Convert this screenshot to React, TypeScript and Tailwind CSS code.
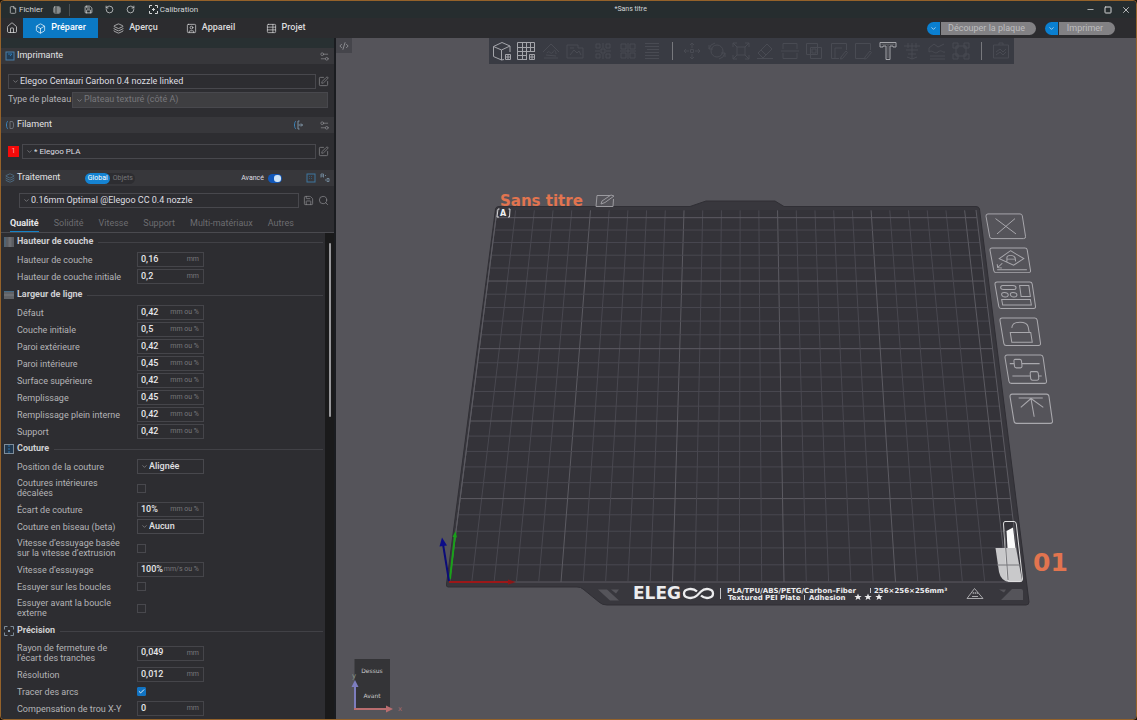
import { useState } from 'react';
import type { ReactNode } from 'react';
import clsx from 'clsx';
import {
  Box,
  Check,
  ChevronDown,
  CodeXml,
  File,
  House,
  Layers,
  Minus,
  RotateCcw,
  RotateCw,
  Save,
  Search,
  Settings2,
  Square,
  SquarePen,
  SquareUser,
  TableProperties,
  X,
} from 'lucide-react';

type Field =
  | { kind: 'text'; id: string; label: string; value: string; unit: string }
  | { kind: 'select'; id: string; label: string; options: string[] }
  | { kind: 'check'; id: string; label: string; checked?: boolean };

type Group = { title: string; icon: ReactNode; fields: Field[] };

const GROUPS: Group[] = [
  {
    title: 'Hauteur de couche',
    icon: (
      <svg viewBox="0 0 10 10" className="size-[10px]">
        <rect width="10" height="10" fill="#5b5d62" />
        <path d="M1 0v10" stroke="#456a86" strokeWidth="1" />
        <path d="M6 0v10" stroke="#6c6e73" strokeWidth="3" />
      </svg>
    ),
    fields: [
      { kind: 'text', id: 'layer', label: 'Hauteur de couche', value: '0,16', unit: 'mm' },
      { kind: 'text', id: 'first-layer', label: 'Hauteur de couche initiale', value: '0,2', unit: 'mm' },
    ],
  },
  {
    title: 'Largeur de ligne',
    icon: (
      <svg viewBox="0 0 10 10" className="size-[10px]">
        <rect y="1" width="10" height="8" fill="#606267" />
        <path d="M0 1.500h10" stroke="#456a86" strokeWidth="1" />
        <path d="M0 5h10" stroke="#6c6e73" strokeWidth="2" />
      </svg>
    ),
    fields: [
      { kind: 'text', id: 'w-default', label: 'Défaut', value: '0,42', unit: 'mm ou %' },
      { kind: 'text', id: 'w-first', label: 'Couche initiale', value: '0,5', unit: 'mm ou %' },
      { kind: 'text', id: 'w-outer', label: 'Paroi extérieure', value: '0,42', unit: 'mm ou %' },
      { kind: 'text', id: 'w-inner', label: 'Paroi intérieure', value: '0,45', unit: 'mm ou %' },
      { kind: 'text', id: 'w-top', label: 'Surface supérieure', value: '0,42', unit: 'mm ou %' },
      { kind: 'text', id: 'w-infill', label: 'Remplissage', value: '0,45', unit: 'mm ou %' },
      { kind: 'text', id: 'w-solid', label: 'Remplissage plein interne', value: '0,42', unit: 'mm ou %' },
      { kind: 'text', id: 'w-support', label: 'Support', value: '0,42', unit: 'mm ou %' },
    ],
  },
  {
    title: 'Couture',
    icon: (
      <svg viewBox="0 0 10 10" className="size-[10px]" fill="none">
        <rect x=".5" y=".5" width="9" height="9" fill="#22384e" stroke="#7d8c99" />
        <path d="M5 1v8" stroke="#2f76ad" strokeDasharray="2 1" />
      </svg>
    ),
    fields: [
      { kind: 'select', id: 'seam-pos', label: 'Position de la couture', options: ['Alignée', 'Arrière', 'Aléatoire'] },
      { kind: 'check', id: 'seam-stagger', label: 'Coutures intérieures décalées' },
      { kind: 'text', id: 'seam-gap', label: 'Écart de couture', value: '10%', unit: 'mm ou %' },
      { kind: 'select', id: 'scarf', label: 'Couture en biseau (beta)', options: ['Aucun', 'Contour', 'Tout'] },
      { kind: 'check', id: 'wipe-base', label: 'Vitesse d’essuyage basée sur la vitesse d’extrusion' },
      { kind: 'text', id: 'wipe-speed', label: 'Vitesse d’essuyage', value: '100%', unit: 'mm/s ou %' },
      { kind: 'check', id: 'wipe-loops', label: 'Essuyer sur les boucles' },
      { kind: 'check', id: 'wipe-before', label: 'Essuyer avant la boucle externe' },
    ],
  },
  {
    title: 'Précision',
    icon: (
      <svg viewBox="0 0 10 10" className="size-[10px]" fill="none">
        <path d="M.5 3.500v-3h3M6.500.5h3v3M9.500 6.500v3h-3M3.500 9.500h-3v-3" stroke="#7d8c99" />
        <rect x="4" y="4" width="2" height="2" fill="#8aa3b8" />
      </svg>
    ),
    fields: [
      { kind: 'text', id: 'gap-radius', label: 'Rayon de fermeture de l’écart des tranches', value: '0,049', unit: 'mm' },
      { kind: 'text', id: 'resolution', label: 'Résolution', value: '0,012', unit: 'mm' },
      { kind: 'check', id: 'arcs', label: 'Tracer des arcs', checked: true },
      { kind: 'text', id: 'hole-xy', label: 'Compensation de trou X-Y', value: '0', unit: 'mm' },
    ],
  },
];

const MAIN_TABS = [
  { name: 'Préparer', Icon: Box },
  { name: 'Aperçu', Icon: Layers },
  { name: 'Appareil', Icon: SquareUser },
  { name: 'Projet', Icon: TableProperties },
];

const PROCESS_TABS = ['Qualité', 'Solidité', 'Vitesse', 'Support', 'Multi-matériaux', 'Autres'];

function TitleBar() {
  return (
    <header className="flex h-[17px] shrink-0 items-center bg-[#262d2f] text-[#d4d6d7]">
      <button className="ml-2 flex items-center gap-[2px] text-[8px]">
        <File size={8} />
        Fichier
      </button>
      <button aria-label="Menu" className="ml-[10px]">
        <TableProperties size={8} />
      </button>
      <span className="ml-2 h-3 w-px bg-[#4a5052]" />
      <button aria-label="Enregistrer" className="ml-[14px]">
        <Save size={9} />
      </button>
      <button aria-label="Annuler" className="ml-3">
        <RotateCcw size={9} />
      </button>
      <button aria-label="Rétablir" className="ml-3">
        <RotateCw size={9} />
      </button>
      <button className="ml-[14px] flex items-center gap-[2px] text-[8px]">
        <svg viewBox="0 0 9 9" className="size-[9px]" fill="none" stroke="currentColor">
          <path d="M.5 3V.5H3M6 .5h2.500V3M8.500 6v2.500H6M3 8.500H.5V6M4.500 3v3M3 4.500h3" />
        </svg>
        Calibration
      </button>
      <h1 className="flex-1 text-center text-[7px]">*Sans titre</h1>
      <div className="flex items-center pl-[18px]">
        <button aria-label="Réduire" className="flex w-[18px] justify-center">
          <Minus size={9} />
        </button>
        <button aria-label="Agrandir" className="flex w-[18px] justify-center">
          <Square size={8} strokeWidth={3} />
        </button>
        <button aria-label="Fermer" className="mr-px flex w-[18px] justify-center">
          <X size={10} />
        </button>
      </div>
    </header>
  );
}

function SplitButton({ text, wide }: { text: string; wide?: boolean }) {
  return (
    <div className="flex h-[13px] gap-px">
      <button aria-label={`Options : ${text}`} className="flex w-[13px] items-center justify-center rounded-l-full bg-[#0a7fd0] text-white">
        <ChevronDown size={7} />
      </button>
      <button
        className={clsx('rounded-r-full bg-[#828184] pr-1 text-[9px] leading-[13px] text-[#bdbdbf]', wide ? 'w-[95px]' : 'w-[56px]')}
      >
        {text}
      </button>
    </div>
  );
}

function NavBar() {
  return (
    <nav className="flex h-5 shrink-0 items-center bg-[#2c2c2f] text-[#dcdcde]">
      <button aria-label="Accueil" className="flex w-[22px] justify-center">
        <House size={12} strokeWidth={1.5} />
      </button>
      {MAIN_TABS.map(({ name, Icon }, i) => (
        <button
          key={name}
          className={clsx(
            'flex h-5 w-[75px] items-center justify-center gap-[5px] text-[9px] font-medium',
            i === 0 && 'bg-[#0b79c4] text-white',
          )}
        >
          <Icon size={11} strokeWidth={1.5} />
          {name}
        </button>
      ))}
      <div className="ml-auto mr-[21px] flex gap-[9px]">
        <SplitButton text="Découper la plaque" wide />
        <SplitButton text="Imprimer" />
      </div>
    </nav>
  );
}

function Picker({ id, label, options, className }: { id: string; label: string; options: string[]; className?: string }) {
  return (
    <div className={clsx('relative flex items-center border border-[#48484d]', className)}>
      <ChevronDown size={7} className="pointer-events-none absolute left-[3px] text-[#a0a0a4]" />
      <select id={id} aria-label={label} className="h-full w-full appearance-none bg-transparent pl-[11px] text-inherit outline-none">
        {options.map((o) => (
          <option key={o}>{o}</option>
        ))}
      </select>
    </div>
  );
}

function PanelHeader({ icon, title, children }: { icon: ReactNode; title: string; children?: ReactNode }) {
  return (
    <div className="flex h-4 items-center bg-[#37373b] pl-1 pr-1">
      {icon}
      <h2 className="ml-[2px] text-[9px] text-[#e4e4e6]">{title}</h2>
      {children}
    </div>
  );
}

function FieldRow({ field }: { field: Field }) {
  const twoLines = field.label.length > 26;
  return (
    <div className={clsx('flex items-center pl-4', twoLines ? 'h-[26px]' : 'h-[17px]')}>
      <label htmlFor={field.id} className="mr-3 w-[108px] text-[9px] leading-[10px] text-[#b4b4b7]">
        {field.label}
      </label>
      {field.kind === 'text' && (
        <div className="flex h-[15px] w-[67px] items-center border border-[#45454a] pl-[3px] pr-1">
          <input
            id={field.id}
            defaultValue={field.value}
            className="w-0 min-w-0 flex-1 bg-transparent text-[9px] font-medium text-[#e6e6e8] outline-none"
          />
          <span className="text-[7px] leading-[15px] text-[#77777b]">{field.unit}</span>
        </div>
      )}
      {field.kind === 'select' && (
        <Picker
          id={field.id}
          label={field.label}
          options={field.options}
          className="h-[15px] w-[67px] text-[9px] font-medium text-[#e0e0e2]"
        />
      )}
      {field.kind === 'check' && (
        <span className="relative flex size-[9px]">
          <input
            id={field.id}
            type="checkbox"
            defaultChecked={field.checked}
            className="peer size-[9px] appearance-none border border-[#48484d] checked:rounded-[1px] checked:border-[#1173c2] checked:bg-[#1173c2]"
          />
          <Check size={7} strokeWidth={3} className="pointer-events-none absolute left-px top-px hidden text-white peer-checked:block" />
        </span>
      )}
    </div>
  );
}

function Sidebar() {
  const [tab, setTab] = useState(0);

  return (
    <aside className="flex w-[335px] shrink-0 flex-col border-r-2 border-[#1a1c20] bg-[#2d2d31]">
      <div className="h-[10px] shrink-0 bg-[#283032]" />
      <PanelHeader
        title="Imprimante"
        icon={
          <svg viewBox="0 0 10 10" className="size-[10px]" fill="none">
            <rect x="1" y="1" width="8" height="8" fill="#223b53" stroke="#4a7ea8" />
            <path d="M3 3h4M5 5l2-2" stroke="#2f76ad" />
          </svg>
        }
      >
        <button aria-label="Réglages imprimante" className="ml-auto text-[#8f8f93]">
          <Settings2 size={11} strokeWidth={1.5} />
        </button>
      </PanelHeader>
      <div className="flex items-center gap-[2px] pl-[7px] pr-[5px] pt-[10px]">
        <Picker
          id="printer"
          label="Imprimante"
          options={['Elegoo Centauri Carbon 0.4 nozzle linked']}
          className="h-[15px] flex-1 text-[9px] text-[#dfdfe1]"
        />
        <button aria-label="Modifier l’imprimante" className="text-[#8f8f93]">
          <SquarePen size={11} strokeWidth={1.5} />
        </button>
      </div>
      <div className="flex items-center pb-[9px] pl-[7px] pr-[6px] pt-[3px] text-[9px]">
        <label htmlFor="plate-type" className="w-16 whitespace-nowrap text-[#b4b4b7]">
          Type de plateau
        </label>
        <Picker
          id="plate-type"
          label="Type de plateau"
          options={['Plateau texturé (côté A)']}
          className="h-4 flex-1 bg-[#3e3e41] text-[#77777b]"
        />
      </div>

      <PanelHeader
        title="Filament"
        icon={
          <svg viewBox="0 0 10 10" className="size-[10px]" fill="none">
            <path d="M3 1C1 2 1 8 3 9" stroke="#3c84ba" />
            <path d="M5 1.500v7H7.500C9 7 9 3 7.500 1.500z" stroke="#6a7076" />
          </svg>
        }
      >
        <button aria-label="Synchroniser" className="ml-auto mr-4 text-[#7f93a4]">
          <svg viewBox="0 0 10 10" className="size-[10px]" fill="none" stroke="currentColor">
            <path d="M3 1C1 2 1 8 3 9" stroke="#3c84ba" />
            <path d="M6.500 1H5v8h1.500M5.500 5H9.500M8 3.500 9.500 5 8 6.500" />
          </svg>
        </button>
        <button aria-label="Réglages filament" className="text-[#8f8f93]">
          <Settings2 size={11} strokeWidth={1.5} />
        </button>
      </PanelHeader>
      <div className="flex items-center pb-[11px] pl-[7px] pr-[5px] pt-[11px]">
        <button className="size-[11px] bg-[#f50a0a] text-[7px] leading-[11px] text-[#ffb0a8]">1</button>
        <Picker id="filament" label="Filament" options={['* Elegoo PLA']} className="ml-[3px] h-[15px] flex-1 text-[8px] text-[#dfdfe1]" />
        <button aria-label="Modifier le filament" className="ml-[2px] text-[#8f8f93]">
          <SquarePen size={11} strokeWidth={1.5} />
        </button>
      </div>

      <PanelHeader title="Traitement" icon={<Layers size={10} strokeWidth={1.5} className="text-[#5a87a6]" />}>
        <div className="ml-[25px] flex h-[11px] rounded-full bg-[#2d2d31] text-[7px] leading-[11px]">
          <button className="w-[25px] rounded-full bg-[#1583d2] text-white">Global</button>
          <button className="w-[25px] text-[#77777b]">Objets</button>
        </div>
        <label htmlFor="advanced" className="ml-auto text-[7px] text-[#dfdfe1]">
          Avancé
        </label>
        <span className="relative ml-1 mr-[24px] flex">
          <input
            id="advanced"
            type="checkbox"
            role="switch"
            defaultChecked
            className="peer h-[9px] w-[14px] appearance-none rounded-full bg-[#55555a] checked:bg-[#1257b8]"
          />
          <span className="pointer-events-none absolute left-px top-px size-[7px] rounded-[3px] bg-[#cfe4f7] peer-checked:left-[6px]" />
        </span>
        <button aria-label="Comparer">
          <svg viewBox="0 0 10 10" className="size-[10px]" fill="none" stroke="#3f779f">
            <rect x="1" y="1" width="8" height="8" />
            <path d="M3 3.500h4M3 5.500h4" stroke="#2f5878" strokeDasharray="1 1" />
          </svg>
        </button>
        <button aria-label="Réglages par objet" className="ml-1">
          <svg viewBox="0 0 10 10" className="size-[10px]" fill="none" stroke="#6f8496">
            <path d="M1 4.500V1h2.500v3.500M1 3h2.500M7 5.500h2v3H7zM5 2.500h1M5 7h1" />
          </svg>
        </button>
      </PanelHeader>
      <div className="flex items-center pl-[18px] pr-[5px] pt-[7px]">
        <Picker
          id="process"
          label="Traitement"
          options={['0.16mm Optimal @Elegoo CC 0.4 nozzle']}
          className="h-[15px] flex-1 text-[9px] text-[#dfdfe1]"
        />
        <button aria-label="Enregistrer le profil" className="ml-1 text-[#8f8f93]">
          <Save size={11} strokeWidth={1.5} />
        </button>
        <button aria-label="Rechercher" className="ml-1 text-[#8f8f93]">
          <Search size={11} strokeWidth={1.5} />
        </button>
      </div>

      <div role="tablist" className="mt-2 flex h-[17px] shrink-0 gap-[15px] border-b border-[#4a4a4f] pl-[9px]">
        {PROCESS_TABS.map((name, i) => (
          <button
            key={name}
            role="tab"
            aria-selected={i === tab}
            onClick={() => setTab(i)}
            className={clsx(
              'h-4 border-b text-[9px]',
              i === tab ? 'border-[#1583c8] font-bold text-[#e6e6e8]' : 'border-transparent text-[#6c6c70]',
            )}
          >
            {name}
          </button>
        ))}
      </div>

      <div className="flex min-h-0 flex-1">
        <div className="flex-1 overflow-hidden">
          {GROUPS.map((group, i) => (
            <section key={group.title} className={clsx(i % 2 === 1 && 'mt-px')}>
              <div className="flex h-[18px] items-center gap-[3px] pl-[3px] pr-[2px]">
                {group.icon}
                <h3 className="text-[9px] font-bold text-[#cfcfd2]">{group.title}</h3>
                <span className="ml-[2px] h-px flex-1 bg-[#414146]" />
              </div>
              {group.fields.map((field) => (
                <FieldRow key={field.id} field={field} />
              ))}
            </section>
          ))}
        </div>
        <div className="w-[9px] bg-[#1a1a1b] pl-1 pt-[10px]">
          <div className="h-[174px] w-[2px] rounded-full bg-[#98989b]" />
        </div>
      </div>
    </aside>
  );
}

const TOOLS = {
  orient: { name: 'Orienter', d: 'M2 11 10 3l8 8M3 17h14M6 12c2-4 4 3 6-1s3 0 3 2M5 14l10 1' },
  arrange: { name: 'Disposer', d: 'M2 4h11v3h5v10H2zM5 14l4-5 3 3 2-2 2 4M5 7h4' },
  objects: { name: 'Séparer en objets', d: 'M3 3h4v4H3zM8 8h4v4H8zM13 3h4v4h-4zM3 13h4v4H3zM13 13h4v4h-4zM10 2v5M10 13v5M2 10h5M13 10h5' },
  parts: { name: 'Séparer en pièces', d: 'M3 3h5v5H3zM12 3h5v5h-5zM3 12h5v5H3zM12 12h5v5h-5zM10 2v16M2 10h16' },
  layers: { name: 'Couches variables', d: 'M3 2.500h14M3 5.500h14M5 8.500h12M3 11.500h14M3 14.500h14M3 17.500h14' },
  move: { name: 'Déplacer', d: 'M10 2v5M10 13v5M2 10h5M13 10h5M8 4l2-2 2 2M8 16l2 2 2-2M4 8l-2 2 2 2M16 8l2 2-2 2M8.500 8.500h3v3h-3z' },
  rotate: { name: 'Pivoter', d: 'M10 4a6 6 0 1 0 0 12 6 6 0 0 0 0-12M2 8a8 8 0 0 1 6-6M18 12a8 8 0 0 1-6 6M2 4v4h4M18 16v-4h-4' },
  scale: { name: 'Échelle', d: 'M2 6V2h4M14 2h4v4M18 14v4h-4M6 18H2v-4M6 6h8v8H6zM2 2l4 4M18 2l-4 4M18 18l-4-4M2 18l4-4' },
  flat: { name: 'Poser à plat', d: 'M3 12 12 3l5 5-9 9zM2 17.500h16M6 9l5 5' },
  cut: { name: 'Couper', d: 'M3 8V2.500h14V8M1 10h18M3 12v5.500h14V12' },
  boolean: { name: 'Opération booléenne', d: 'M2.500 2.500h11v11h-11zM6.500 6.500h11v11h-11zM8 8h4v4H8z' },
  support: { name: 'Peindre les supports', d: 'M10 17.500H2.500v-15h15V9M6 17V7h7M12 16l5-6 1.500 1.500-5 6-2 .5z' },
  seam: { name: 'Peindre la couture', d: 'M11 17.500H2.500v-15h15V9M12 16l5-6 1.500 1.500-5 6-2 .5z' },
  height: { name: 'Mesurer', d: 'M2 5h16M4 9h12M6 13h8M10 2v16M6 2v5M14 2v5M5 16l5 2 5-2' },
  fuzzy: { name: 'Surface irrégulière', d: 'M2 7l5-4 4 3 6-3M2 11c4-3 5 3 9 0s4 1 7 0M3 15h15M3 18h15M2 7v4' },
  assemble: { name: 'Assembler', d: 'M5 5h10v10H5zM2 2h5v5H2zM13 2h5v5h-5zM2 13h5v5H2zM13 13h5v5h-5z' },
  assembleView: { name: 'Vue d’assemblage', d: 'M2.500 4h15v13h-15zM5 11l4-3 3 3 3-3M5 14l4-3 3 3 3-3M8 4V2h4v2' },
};

function Tool({ id }: { id: keyof typeof TOOLS }) {
  const { name, d } = TOOLS[id];
  return (
    <button aria-label={name} disabled className="flex w-6 justify-center text-[#494b53]">
      <svg viewBox="0 0 20 20" className="size-5" fill="none" stroke="currentColor">
        <path d={d} />
      </svg>
    </button>
  );
}

function Toolbar() {
  return (
    <div role="toolbar" className="absolute left-[153px] top-0 flex h-[26px] w-[525px] items-center justify-between bg-[#393b43] px-px text-[#a4a5aa]">
      <button aria-label="Ajouter un objet" className="flex w-6 justify-center">
        <svg viewBox="0 0 20 20" className="size-5" fill="none" stroke="currentColor">
          <path d="M12 18.500 9.500 19 1.500 15.500V5.500L10 1.500l8 3.500v6M1.500 5.500 9.500 9l8.500-4M9.500 9v10" />
          <path d="M13.500 13.500h5V18.500h-5zM16 13.500v5M13.500 16h5" />
        </svg>
      </button>
      <button aria-label="Ajouter une plaque" className="flex w-6 justify-center">
        <svg viewBox="0 0 20 20" className="size-5" fill="none" stroke="currentColor">
          <path d="M11 18.500H1.500v-17h17V11M6.500 1.500v17M10.500 1.500v17M14.500 1.500V11M1.500 6.500h17M1.500 10.500h17M1.500 14.500H11" />
          <path d="M13.500 13.500h5v5h-5zM16 13.500v5M13.500 16h5" />
        </svg>
      </button>
      <Tool id="orient" />
      <Tool id="arrange" />
      <span className="w-[3px]" />
      <Tool id="objects" />
      <Tool id="parts" />
      <Tool id="layers" />
      <span className="mx-[7px] h-[18px] w-px bg-[#77787d]" />
      <Tool id="move" />
      <Tool id="rotate" />
      <Tool id="scale" />
      <Tool id="flat" />
      <Tool id="cut" />
      <Tool id="boolean" />
      <Tool id="support" />
      <Tool id="seam" />
      <button aria-label="Texte" className="flex w-6 justify-center">
        <svg viewBox="0 0 20 20" className="size-5" fill="none" stroke="currentColor">
          <path d="M2 1.500h16V6h-3V5h-3v13.500H8V5H5v1H2z" />
          <path d="M3.500 3.200h13M10 4v13" stroke="#66676c" />
        </svg>
      </button>
      <Tool id="height" />
      <Tool id="fuzzy" />
      <Tool id="assemble" />
      <span className="mx-[7px] h-[18px] w-px bg-[#77787d]" />
      <Tool id="assembleView" />
    </div>
  );
}

// bed millimetres / 10 -> canvas point
function project(u: number, v: number) {
  const w = 1 + 0.0075 * v;
  return [(449.5 + 22.3 * u + 5.58 * v) / w, (582 - 12.94 * v) / w];
}

const BED = 25.6;

function GridLines() {
  const lines = [];
  for (let i = 0; i <= 25; i++) {
    const color = i % 5 === 0 ? '#5c5b62' : '#494850';
    const [ax, ay] = project(i, 0);
    const [bx, by] = project(i, BED);
    const [cx, cy] = project(0, i);
    const [dx, dy] = project(BED, i);
    lines.push(<line key={`v${i}`} x1={ax} y1={ay} x2={bx} y2={by} stroke={color} />);
    lines.push(<line key={`h${i}`} x1={cx} y1={cy} x2={dx} y2={dy} stroke={color} />);
  }
  return <g strokeWidth="1">{lines}</g>;
}

const FRAME = 'M3 1H35Q37 1 37.300 3L40.500 25Q41 27.500 38.500 27.500H7Q5 27.500 4.700 25.500L1 3.500Q.7 1 3 1z';

const PLATE_ACTIONS = [
  { name: 'Supprimer la plaque', x: 985, y: 213, w: 42, h: 27, d: 'M10.500 6 31 22.500M30 6 12 22.500' },
  {
    name: 'Orientation automatique',
    x: 989,
    y: 247,
    w: 43,
    h: 27,
    d: 'M21 4 34 12.500 24 19.500 10 12.500zM17.500 15.500v-4q0-2.500 3.500-2.500t4.500 2.500l.5 4M17.500 13h8M8 24.500H37M13 17.500 8.500 22M8 18.500l.5 3.700 4 .3',
  },
  {
    name: 'Disposition automatique',
    x: 994,
    y: 281,
    w: 43,
    h: 29,
    d: 'M8.500 4.500h10q3 0 3 2t-2 2h-10q-3 0-3-2t2-2zM25 4.500h9l1.500 11h-9zM10 11.500c5 0 5 4.500 1 4.500s-5-4.500-1-4.500M18.500 11.500c5 0 5 4.500 1 4.500s-5-4.500-1-4.500M7.500 18.500H35.500L36.500 24H8.500z',
  },
  { name: 'Verrouiller la plaque', x: 999, y: 317, w: 43, h: 30, d: 'M11 15H31L32.500 24.500H12.500zM12.500 10.500Q13 5 20.500 5q7 0 8 4.500L29.500 15' },
  {
    name: 'Réglages de la plaque',
    x: 1004,
    y: 354,
    w: 44,
    h: 31,
    d: 'M5.500 9H10M16.500 9H34M10.500 5h4.500q1.500 0 1.700 1.500l.5 5q0 1.500-1.500 1.500h-4q-1.500 0-1.700-1.500l-.5-5Q9.500 5 10.500 5zM8 20.500H25.500M33 20.500H36M26.500 16.500H31q1.500 0 1.700 1.500l.5 5q0 1.500-1.500 1.500h-4.500q-1.500 0-1.700-1.500l-.5-5q0-1.500 1-1.500z',
  },
  { name: 'Placer devant', x: 1009, y: 393, w: 45, h: 32, d: 'M9 4.500H31.500M20.500 5 23.500 21.500M20.500 5 11 13M20.500 5 32 13' },
];

function Scene() {
  return (
    <svg
      viewBox="336 38 800 681"
      preserveAspectRatio="xMidYMid slice"
      className="absolute inset-0 size-full font-['DejaVu_Sans',sans-serif]"
    >
      {/* plate body with rear handle and front label lip */}
      <path
        d="M499 206.500H690L706 201H775L784 206.500H976Q979 206.500 979.500 209L1029 602Q1029 605 1026 605H607Q602 605 599 602L583 589Q581 587 577 587H448Q446 587 446.500 584L495.500 209Q496 206.500 499 206.500z"
        fill="#38373d"
        stroke="#302f35"
      />
      <path d="M497 210H976L1020.500 582H449.500z" fill="#343339" />
      <GridLines />
      <path d="M449.500 582 497 210M1020.500 582 976 210" stroke="#5c5b62" fill="none" />

      <path d="M499.500 209H498L497 217H499M508.500 209H510L509.500 217H508" fill="none" stroke="#d8d8da" />
      <text x="500" y="216" fontSize="8" fontWeight="700" fill="#f0f0f2">
        A
      </text>

      <text x="500" y="206" fontSize="15" fontWeight="700" fill="#e2744f">
        Sans titre
      </text>
      <path d="M610 195.500H597L596 206.500H613L613.500 199M601 204l1-3 9-6 3 1-9 6.500z" fill="none" stroke="#9b9a9f" />

      {/* front label */}
      <path d="M598 589.500h9l12 11h-9zM611 589.500h8l-3 4z" fill="#55545a" />
      <g fill="#ececee" fontWeight="700">
        <text x="633" y="599" fontSize="17">
          ELEG
        </text>
        <path
          d="M697 591.500C693 587.500 684 588.500 684 593.500S693 599.500 697 595.500L701 591.500C705 587.500 713 588.500 713 593.500S705 599.500 701 595.500"
          fill="none"
          stroke="#ececee"
          strokeWidth="2.300"
        />
        <text x="727" y="593" fontSize="7">
          PLA/TPU/ABS/PETG/Carbon–Fiber
        </text>
        <text x="874" y="593" fontSize="7">
          256×256×256mm³
        </text>
        <text x="728" y="600" fontSize="7">
          Textured PEI Plate
        </text>
        <text x="809" y="600" fontSize="7">
          Adhesion
        </text>
        {[858, 868, 879].map((x) => (
          <path key={x} transform={`translate(${x} 597)`} d="M0-3.500 1-1H3.700L1.600.6 2.400 3 0 1.600-2.400 3-1.600.6-3.700-1H-1z" />
        ))}
      </g>
      <path d="M720.500 588v11M870.500 588v5M804.500 595v5" stroke="#c4c4c7" />
      <path d="M974.500 588.500 983 598.500H967z" fill="none" stroke="#a8a8ab" strokeLinejoin="round" />
      <path d="M972 596.500h6M973 594q1-1 0-2M975 594q1-1 0-2M977 594q1-1 0-2" fill="none" stroke="#a8a8ab" />
      <path d="M999 589.500h7l-2 3zM1001 600l11-11h9q2 0 2 2v9z" fill="#55545a" />

      {/* purge wiper */}
      <path d="M995.500 548H1016L1022 580Q1022 582 1020 582H1009Q1001 581 999 572z" fill="#c9c9cb" />
      <path d="M1006.500 531 1013 527.500 1015.500 548H1007.500z" fill="#fafafa" />
      <path d="M1005 521.500H1014Q1016 521.500 1016.300 524L1022.500 579Q1022.500 581.500 1020.500 581.500H1009.500Q1007.500 581.500 1007.300 579L1003.500 524Q1003.500 521.500 1005 521.500z" fill="none" stroke="#dededf" />
      <path d="M1004.500 531 1008 580M997 565H1020" stroke="#77777b" />

      {/* origin axes */}
      <g strokeWidth="2">
        <path d="M449 582H512" stroke="#9c1718" />
        <path d="M450 579 455 535" stroke="#19a119" />
        <path d="M449 581 443 544" stroke="#0c0c78" />
      </g>
      <path d="M508 579.500 516 582 508 584.500z" fill="#8c1718" />
      <path d="M452.500 537 455.500 531 457 537.500z" fill="#19a119" />
      <path d="M439.500 546.500 442 537.500 447 545.500z" fill="#0c0c88" />

      <text x="1033" y="571" fontSize="25" fontWeight="700" fill="#e2744f">
        01
      </text>

      {PLATE_ACTIONS.map((a) => (
        <foreignObject key={a.name} x={a.x} y={a.y} width={a.w} height={a.h}>
          <button aria-label={a.name} className="block size-full">
            <svg viewBox="0 0 42 29" preserveAspectRatio="none" className="size-full" fill="none" stroke="#a9a8ad">
              <path d={FRAME} />
              <path d={a.d} />
            </svg>
          </button>
        </foreignObject>
      ))}

      {/* view cube */}
      <path d="M354.500 659H390V708H354.500z" fill="#343437" />
      <g fontSize="6" fill="#c8c8ca" textAnchor="middle">
        <text x="372" y="673">
          Dessus
        </text>
        <text x="372" y="698">
          Avant
        </text>
      </g>
      <g strokeWidth="2">
        <path d="M355 709V686" stroke="#7d7dbe" />
        <path d="M354 709H388" stroke="#b96d6f" />
      </g>
      <path d="M351.500 687 355 680 358.500 687z" fill="#7d7dbe" />
      <path d="M386 705.500 393 709 386 712.500z" fill="#b96d6f" />
      <text x="352" y="678" fontSize="7" fill="#8c9c8c">
        y
      </text>
      <text x="398" y="711" fontSize="7" fill="#a3686b">
        x
      </text>
    </svg>
  );
}

export default function App() {
  return (
    <div className="h-screen bg-[#1a1108]">
      <div className="flex h-full flex-col overflow-hidden rounded-[4px] border border-[#94622a] bg-[#2d2d31] font-[Roboto,sans-serif]">
        <TitleBar />
        <NavBar />
        <div className="flex min-h-0 flex-1">
          <Sidebar />
          <main className="relative min-w-0 flex-1 overflow-hidden bg-[#55545a]">
            <Scene />
            <button aria-label="Replier le panneau" className="absolute left-0 top-0 flex h-[15px] w-4 items-center justify-center bg-[#45454b] text-[#b4b5b9]">
              <CodeXml size={10} strokeWidth={1.5} />
            </button>
            <Toolbar />
          </main>
        </div>
      </div>
    </div>
  );
}
